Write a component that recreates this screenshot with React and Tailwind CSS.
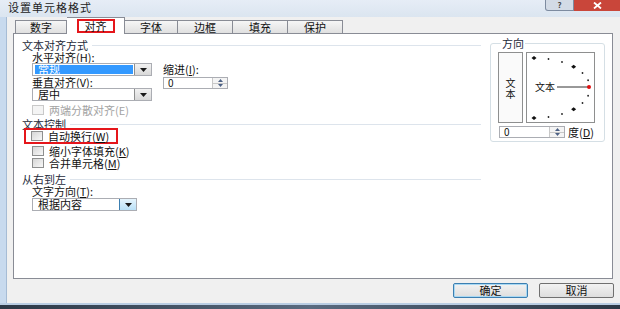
import React from "react";

function Arrow({ className = "" }) {
    return (
        <svg width="7" height="4" viewBox="0 0 7 4" className={className}>
            <path d="M0 0H7L3.5 4Z" fill="#1a1a1a" />
        </svg>
    );
}

function Select({ value, width, highlight, hot }) {
    return (
        <div
            className={`h-[13px] flex bg-white border border-[#abadb3] ${width}`}
        >
            <div className="flex-1 flex items-center pl-[2px] pr-[1px] py-[1px]">
                <span
                    className={`h-full flex-1 flex items-center pl-[3px] ${
                        highlight ? "bg-[#3399ff] text-white" : ""
                    }`}
                >
                    {value}
                </span>
            </div>
            <div
                className={`w-[17px] flex items-center justify-center border-l ${
                    hot
                        ? "bg-linear-to-b from-[#e5f4fc] to-[#b9e0f7] border-[#3c7fb1]"
                        : "bg-linear-to-b from-[#f2f2f2] to-[#d8d8d8] border-[#8e8f8f]"
                }`}
            >
                <Arrow />
            </div>
        </div>
    );
}

function Spin({ width }) {
    return (
        <div className={`h-[12px] flex bg-white border border-[#abadb3] ${width}`}>
            <span className="flex-1 flex items-center pl-[4px] text-[10px]">0</span>
            <div className="w-[15px] flex flex-col border-l border-[#c8c8c8] bg-[#f4f4f4]">
                <div className="flex-1 flex items-center justify-center border-b border-[#c8c8c8]">
                    <svg width="5" height="3" viewBox="0 0 5 3">
                        <path d="M0 3H5L2.5 0Z" fill="#4d6185" />
                    </svg>
                </div>
                <div className="flex-1 flex items-center justify-center">
                    <svg width="5" height="3" viewBox="0 0 5 3">
                        <path d="M0 0H5L2.5 3Z" fill="#4d6185" />
                    </svg>
                </div>
            </div>
        </div>
    );
}

function Check({ label, disabled }) {
    return (
        <div className="flex items-center gap-[5px]">
            <span
                className={`w-[12px] h-[10px] border ${
                    disabled
                        ? "border-[#c9c9c9] bg-[#f4f4f4]"
                        : "border-[#8e8f8f] bg-linear-to-br from-[#d6d6d6] to-[#f8f8f8]"
                }`}
            />
            <span className={disabled ? "text-[#a3a3a3]" : ""}>{label}</span>
        </div>
    );
}

function Section({ title }) {
    return (
        <div className="h-[12px] flex items-center gap-[4px] text-[#1e2a3a]">
            <span>{title}</span>
            <div className="flex-1 h-px bg-[#dde4ec]" />
        </div>
    );
}

function Dial() {
    const cx = 7;
    const cy = 35;
    const dots = [];
    for (let a = -90; a <= 90; a += 15) {
        if (a === 0) continue;
        const r = (a * Math.PI) / 180;
        const x = cx + 56 * Math.cos(r);
        const y = cy + 30 * Math.sin(r);
        const big = a % 45 === 0;
        dots.push(
            big ? (
                <path
                    key={a}
                    d={`M${x - 2.5} ${y}L${x} ${y - 2}L${x + 2.5} ${y}L${x} ${y + 2}Z`}
                    fill="#111"
                />
            ) : (
                <circle key={a} cx={x} cy={y} r="0.9" fill="#222" />
            )
        );
    }
    return (
        <div className="relative w-[69px] h-[71px] bg-white border border-[#8e8f8f]">
            <svg width="67" height="69" viewBox="0 0 67 69" className="block">
                {dots}
                <line x1="30" y1="34" x2="62" y2="34" stroke="#333" strokeWidth="1" />
                <circle cx="62" cy="34" r="2" fill="#e01010" />
            </svg>
            <span className="absolute left-[8px] top-[29px] text-[10px]">文本</span>
        </div>
    );
}

const tab =
    "w-[55px] h-[13px] flex items-center justify-center border border-b-0 border-l-0 border-[#898c95] bg-linear-to-b from-[#f6f6f6] to-[#e0e0e0]";

export default function App() {
    return (
        <div className="w-[620px] h-[309px] overflow-hidden bg-[#f0f0f0] flex flex-col font-['Noto_Sans_CJK_SC','Noto_Sans',sans-serif] text-[11px] leading-none text-[#111]">
            {/* title bar */}
            <div className="h-[17px] shrink-0 flex justify-between items-start bg-linear-to-b from-[#e6edf6] to-[#dbe5f0]">
                <span className="pl-[8px] pt-[2px] tracking-[1px] text-[#222]">设置单元格格式</span>
                <div className="w-[75px] h-[11px] flex">
                    <span className="w-[29px] h-[11px] flex items-center justify-center rounded-bl-[3px] border border-t-0 border-[#7d8ba0] bg-[#d3dbe6] text-[8px] font-bold text-[#4a4a4a]">
                        ?
                    </span>
                    <span className="w-[46px] h-[11px] flex items-center justify-center bg-[#c9463a]">
                        <svg width="9" height="7" viewBox="0 0 9 7">
                            <path d="M1 0.5L8 6.5M8 0.5L1 6.5" stroke="#fff" strokeWidth="1.8" />
                        </svg>
                    </span>
                </div>
            </div>

            <div className="h-[286px] shrink-0 flex">
                <div className="w-[7px] bg-[#c8daee] border-r border-[#a6bcd5]" />
                <div className="flex-1 flex flex-col pl-[6px]">
                    {/* tabs */}
                    <div className="h-[16px] flex items-end pl-[2px]">
                        <div className="w-[52px] h-[13px] flex items-center justify-center border border-b-0 border-[#898c95] bg-linear-to-b from-[#f6f6f6] to-[#e0e0e0]">
                            数字
                        </div>
                        <div className="relative z-10 w-[58px] h-[17px] -mb-px flex justify-center pt-[1px] border border-b-0 border-l-0 border-[#898c95] bg-white">
                            <span className="w-[38px] h-[14px] flex items-center justify-center border-2 border-[#e5161b]">
                                对齐
                            </span>
                        </div>
                        <div className={tab.replace("w-[55px]", "w-[53px]")}>字体</div>
                        <div className={tab}>边框</div>
                        <div className={tab}>填充</div>
                        <div className={tab}>保护</div>
                    </div>

                    {/* panel */}
                    <div className="w-[600px] h-[246px] flex bg-white border border-[#898c95]">
                        <div className="w-[467px] pl-[8px] flex flex-col">
                            <div className="mt-[5px]">
                                <Section title="文本对齐方式" />
                            </div>
                            <div className="pl-[10px] flex flex-col">
                                <div className="h-[12px] flex items-center">水平对齐(<u>H</u>):</div>
                                <div className="flex gap-[11px]">
                                    <div className="flex flex-col">
                                        <Select value="常规" width="w-[120px]" highlight />
                                        <div className="h-[12px] flex items-center">垂直对齐(<u>V</u>):</div>
                                        <Select value="居中" width="w-[120px]" />
                                    </div>
                                    <div className="flex flex-col">
                                        <div className="h-[12px] flex items-center">缩进(<u>I</u>):</div>
                                        <div className="mt-[2px]">
                                            <Spin width="w-[65px]" />
                                        </div>
                                    </div>
                                </div>
                                <div className="mt-[3px] h-[12px] flex items-center">
                                    <Check label="两端分散对齐(E)" disabled />
                                </div>
                            </div>
                            <div className="mt-[2px]">
                                <Section title="文本控制" />
                            </div>
                            <div className="-mt-[2px] ml-[2px] w-[94px] h-[16px] flex items-center pl-[5px] border-2 border-[#e5161b]">
                                <Check label={<>自动换行(<u>W</u>)</>} />
                            </div>
                            <div className="pl-[10px] flex flex-col">
                                <div className="mt-[1px] h-[12px] flex items-center">
                                    <Check label={<>缩小字体填充(<u>K</u>)</>} />
                                </div>
                                <div className="h-[12px] flex items-center">
                                    <Check label={<>合并单元格(<u>M</u>)</>} />
                                </div>
                            </div>
                            <div className="mt-[4px]">
                                <Section title="从右到左" />
                            </div>
                            <div className="pl-[10px] flex flex-col">
                                <div className="h-[12px] flex items-center">文字方向(<u>T</u>):</div>
                                <div className="mt-[1px]">
                                    <Select value="根据内容" width="w-[105px]" hot />
                                </div>
                            </div>
                        </div>

                        {/* orientation */}
                        <fieldset className="ml-[9px] mt-[4px] w-[115px] h-[104px] border border-[#d5dfe5] rounded-[3px] pl-[7px]">
                            <legend className="ml-[3px] px-[1px] text-[#1e2a3a]">方向</legend>
                            <div className="mt-[3px] flex gap-[3px]">
                                <div className="w-[25px] h-[71px] flex flex-col items-center justify-center border border-[#8e8f8f] bg-[#fafafa] text-[10px] leading-[11px]">
                                    <span>文</span>
                                    <span>本</span>
                                </div>
                                <Dial />
                            </div>
                            <div className="mt-[3px] ml-[1px] flex items-center gap-[3px]">
                                <Spin width="w-[66px]" />
                                <span>度(<u>D</u>)</span>
                            </div>
                        </fieldset>
                    </div>

                    {/* buttons */}
                    <div className="flex-1 flex justify-end items-start pt-[4px] pr-[6px] gap-[11px]">
                        <div className="w-[75px] h-[15px] flex items-center justify-center rounded-[2px] border border-[#3c7fb1] bg-linear-to-b from-[#f2f2f2] to-[#dedede] shadow-[inset_0_0_0_1px_#a8d8f3]">
                            确定
                        </div>
                        <div className="w-[75px] h-[15px] flex items-center justify-center rounded-[2px] border border-[#707070] bg-linear-to-b from-[#f2f2f2] to-[#dedede]">
                            取消
                        </div>
                    </div>
                </div>
            </div>
            <div className="h-[2px] shrink-0 bg-[#b9cde3]" />
            <div className="h-[4px] shrink-0 bg-linear-to-r from-[#2c3846] via-[#5a6b80] to-[#2c3846]" />
        </div>
    );
}
